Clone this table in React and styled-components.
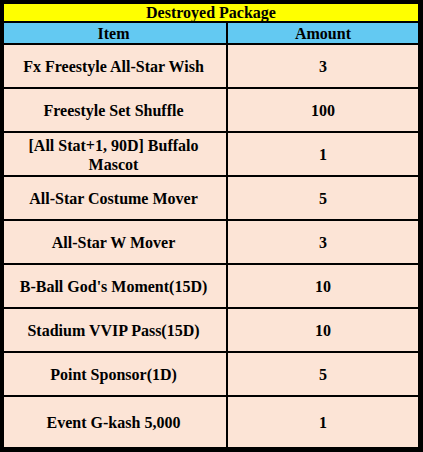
import React from "react";
import styled, { createGlobalStyle } from "styled-components";

const GlobalStyle = createGlobalStyle`
  html, body {
    margin: 0;
    padding: 0;
    background: #000;
  }
`;

const items = [
  ["Fx Freestyle All-Star Wish", "3"],
  ["Freestyle Set Shuffle", "100"],
  ["[All Stat+1, 90D] Buffalo Mascot", "1"],
  ["All-Star Costume Mover", "5"],
  ["All-Star W Mover", "3"],
  ["B-Ball God's Moment(15D)", "10"],
  ["Stadium VVIP Pass(15D)", "10"],
  ["Point Sponsor(1D)", "5"],
  ["Event G-kash 5,000", "1"],
];

export default function App() {
  return (
    <>
      <GlobalStyle />
      <Frame>
        <Grid>
          <Title>Destroyed Package</Title>
          <Head $first>Item</Head>
          <Head>Amount</Head>
          {items.map(([name, amount]) => (
            <React.Fragment key={name}>
              <Cell $first>
                <Label>{name}</Label>
              </Cell>
              <Cell>{amount}</Cell>
            </React.Fragment>
          ))}
        </Grid>
      </Frame>
    </>
  );
}

const Frame = styled.div`
  box-sizing: border-box;
  width: 423px;
  height: 452px;
  padding: 4px 5px 5px 4px;
  background: #000;
`;

const Grid = styled.div`
  height: 100%;
  display: grid;
  grid-template-columns: 222px 1fr;
  grid-template-rows: 17px 20px repeat(8, 42px) 1fr;
  gap: 2px;
  background: #000;
  font-family: "Liberation Serif", "Times New Roman", serif;
  font-weight: bold;
  font-size: 16px;
  color: #000;
`;

const Box = styled.div`
  box-sizing: border-box;
  display: flex;
  align-items: center;
  justify-content: center;
  text-align: center;
  padding-right: ${(p) => (p.$first ? "3px" : "0")};
`;

const Title = styled(Box)`
  grid-column: 1 / 3;
  background: #ffff00;
  padding-top: 1px;
`;

const Head = styled(Box)`
  background: #63c9f2;
  padding-top: 2px;
`;

const Cell = styled(Box)`
  background: #fce4d6;
  line-height: 19px;
  padding-top: 1px;
`;

const Label = styled.span`
  display: block;
  max-width: 190px;
`;
